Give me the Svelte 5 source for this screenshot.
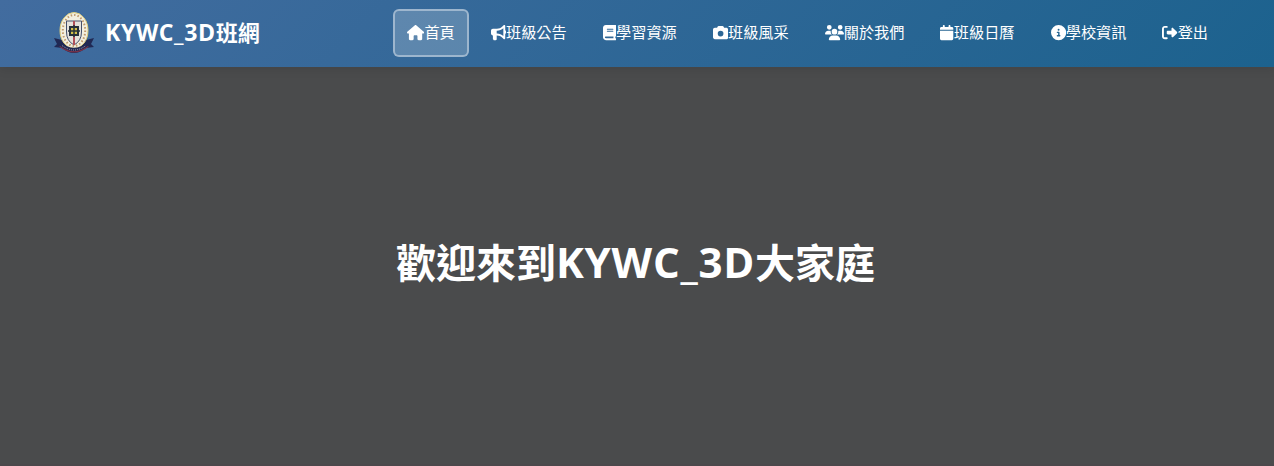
<script>
  const items = [
    { label: '首頁', w: 576, active: true, d: 'M575.8 255.5c0 18-15 32.1-32 32.1h-32l.7 160.2c0 2.700-.2 5.400-.5 8.100V472c0 22.100-17.900 40-40 40h-16c-1.100 0-2.200 0-3.300-.1c-1.400 .1-2.800 .1-4.200 .1H392c-22.100 0-40-17.900-40-40V376c0-17.700-14.300-32-32-32h-64c-17.700 0-32 14.300-32 32v96c0 22.100-17.900 40-40 40h-55.900c-1.500 0-3-.1-4.500-.2c-1.200 .1-2.400 .2-3.600 .2H104c-22.100 0-40-17.900-40-40V287.600H32c-18 0-32-14-32-32.100c0-9 3-17 10-24L266.400 8c7-7 15-8 22-8s15 2 21 7L564.800 231.500c8 7 12 15 11 24z' },
    { label: '班級公告', w: 512, d: 'M480 32c0-12.900-7.800-24.600-19.800-29.600s-25.700-2.200-34.900 6.900L381.700 53c-48 48-113.100 75-181 75H64c-35.300 0-64 28.700-64 64v96c0 35.300 28.700 64 64 64v128c0 17.700 14.300 32 32 32h64c17.700 0 32-14.300 32-32V352h8.700c67.900 0 133 27 181 75l43.600 43.600c9.200 9.200 22.900 11.900 34.900 6.900s19.800-16.600 19.800-29.600V300.400c18.600-8.800 32-32.500 32-60.400s-13.400-51.600-32-60.400V32zm-64 76.700V371.300C357.200 317.800 280.500 288 200.700 288H192v-96h8.700c79.800 0 156.500-29.800 215.300-83.300z' },
    { label: '學習資源', w: 448, d: 'M96 0C43 0 0 43 0 96v320c0 53 43 96 96 96h320c17.700 0 32-14.300 32-32s-14.300-32-32-32v-64c17.700 0 32-14.300 32-32V32c0-17.700-14.300-32-32-32H96zm0 384h256v64H96c-17.700 0-32-14.300-32-32s14.300-32 32-32zm32-240c0-8.800 7.200-16 16-16h192c8.800 0 16 7.200 16 16s-7.200 16-16 16H144c-8.800 0-16-7.200-16-16zm16 48h192c8.800 0 16 7.200 16 16s-7.200 16-16 16H144c-8.800 0-16-7.200-16-16s7.200-16 16-16z' },
    { label: '班級風采', w: 512, d: 'M149.100 64.800L138.700 96H64C28.700 96 0 124.700 0 160v256c0 35.300 28.700 64 64 64h384c35.300 0 64-28.700 64-64V160c0-35.300-28.700-64-64-64h-74.700L362.900 64.800C356.400 45.200 338.100 32 317.400 32H194.600c-20.700 0-39 13.200-45.500 32.800zM256 192a96 96 0 1 1 0 192 96 96 0 1 1 0-192z' },
    { label: '關於我們', w: 640, d: 'M144 0a80 80 0 1 1 0 160A80 80 0 1 1 144 0zM512 0a80 80 0 1 1 0 160A80 80 0 1 1 512 0zM0 298.700C0 239.800 47.800 192 106.700 192h42.700c15.900 0 31 3.500 44.600 9.700c-1.300 7.200-1.900 14.700-1.900 22.300c0 38.200 16.800 72.500 43.300 96H21.300C9.600 320 0 310.400 0 298.700zM405.300 320h-.7c26.600-23.500 43.300-57.800 43.300-96c0-7.600-.7-15-1.900-22.300c13.600-6.300 28.700-9.700 44.600-9.700h42.700C592.200 192 640 239.800 640 298.700c0 11.800-9.600 21.300-21.300 21.300H405.300zM224 224a96 96 0 1 1 192 0 96 96 0 1 1-192 0zM128 485.300C128 411.700 187.700 352 261.300 352h117.400C452.300 352 512 411.700 512 485.300c0 14.700-11.900 26.700-26.700 26.700H154.700c-14.700 0-26.700-11.900-26.700-26.700z' },
    { label: '班級日曆', w: 448, d: 'M96 32v32H48C21.500 64 0 85.500 0 112v48h448v-48c0-26.500-21.500-48-48-48h-48V32c0-17.700-14.300-32-32-32s-32 14.300-32 32v32H160V32c0-17.700-14.300-32-32-32S96 14.300 96 32zM448 192H0v272c0 26.500 21.500 48 48 48h352c26.500 0 48-21.500 48-48V192z' },
    { label: '學校資訊', w: 512, d: 'M256 512A256 256 0 1 0 256 0a256 256 0 1 0 0 512zM216 336h24v-64h-24c-13.300 0-24-10.700-24-24s10.700-24 24-24h48c13.300 0 24 10.700 24 24v88h8c13.300 0 24 10.700 24 24s-10.700 24-24 24h-80c-13.300 0-24-10.700-24-24s10.700-24 24-24zm40-208a32 32 0 1 1 0 64 32 32 0 1 1 0-64z' },
    { label: '登出', w: 512, d: 'M377.900 105.900L500.700 228.700c7.200 7.200 11.300 17.100 11.300 27.300s-4.100 20.100-11.300 27.300L377.900 406.100c-6.400 6.400-15 9.900-24 9.900c-18.700 0-33.900-15.200-33.900-33.900V320H192c-17.700 0-32-14.300-32-32v-64c0-17.700 14.300-32 32-32h128v-62.100c0-18.700 15.200-33.900 33.900-33.900c9 0 17.600 3.600 24 9.900zM160 96H96c-17.700 0-32 14.300-32 32v256c0 17.700 14.300 32 32 32h64c17.700 0 32 14.300 32 32s-14.300 32-32 32H96c-53 0-96-43-96-96V128C0 75 43 32 96 32h64c17.700 0 32 14.300 32 32s-14.300 32-32 32z' }
  ];
</script>

<header>
  <div class="bar">
    <a class="brand" href="#home">
      <svg class="crest" viewBox="0 0 44 44" aria-hidden="true">
        <path d="M2 27l8 2q12 11 24 0l8-2-3 6 3 3-8 1q-12 10-24 0l-8-1 3-3z" fill="#202954" />
        <path d="M8 35q14 11 28 0" fill="none" stroke="#7b3349" stroke-width="2" />
        <ellipse cx="22" cy="19.500" rx="14" ry="18" fill="#f3efdf" stroke="#e0cf7c" stroke-width="1" />
        <ellipse cx="22" cy="19.500" rx="11.200" ry="15.500" fill="none" stroke="#c09a6c" stroke-width="2" stroke-dasharray="1.500 2" />
        <path d="M14.500 10h15v11q0 9-7.500 13-7.500-4-7.500-13z" fill="#e4e2dc" stroke="#46506c" stroke-width="1" />
        <path d="M22 10v24" stroke="#b0505a" stroke-width="2" />
        <path d="M18 16h8v8h-8z" fill="#d3c04b" stroke="#26313b" stroke-width="2" />
        <path d="M22 14v12M16 20h12" stroke="#26313b" stroke-width="1.500" />
        <path d="M7 32q15 13 30 0" fill="none" stroke="#202954" stroke-width="3.500" />
        <path d="M10 34.500q12 9 24 0" fill="none" stroke="#cbbac5" stroke-width=".8" stroke-dasharray="1 1" />
      </svg>
      <span class="name"><span class="latin">KYWC_3D</span>班網</span>
    </a>
    <nav>
      {#each items as item}
        <a href="#{item.label}" class:active={item.active}>
          <svg viewBox="0 0 {item.w} 512" style="width:{item.w / 512}em" aria-hidden="true"><path fill-rule="evenodd" d={item.d} /></svg><span>{item.label}</span>
        </a>
      {/each}
    </nav>
  </div>
</header>
<main>
  <h1>歡迎來到<span class="latin">KYWC_3D</span>大家庭</h1>
</main>

<style>
  :global(body) { background: #4a4b4c; overflow: hidden; }
  header, main { font-family: "Noto Sans CJK TC", sans-serif; color: #fff; }
  header {
    position: relative;
    height: 67px;
    background: linear-gradient(135deg, #426c9f, #1c628e);
    box-shadow: 0 2px 10px rgba(0, 0, 0, 0.1);
  }
  .bar {
    box-sizing: border-box;
    width: 1200px;
    height: 66px;
    margin: 0 auto;
    padding: 0 15px;
    display: flex;
    align-items: center;
    justify-content: space-between;
  }
  a { color: #fff; text-decoration: none; }
  .brand { display: flex; align-items: center; gap: 9px; }
  .crest { width: 44px; height: 44px; }
  .name { padding-bottom: 3px; font-size: 22px; font-weight: 700; line-height: 32px; white-space: nowrap; }
  .latin { font-family: "Open Sans", sans-serif; font-size: 1.05em; letter-spacing: 0.018em; }
  .name .latin { letter-spacing: 0.025em; }
  nav { display: flex; gap: 8px; }
  nav a {
    box-sizing: border-box;
    height: 48px;
    display: flex;
    align-items: center;
    padding: 0 12px;
    border: 2px solid transparent;
    border-radius: 6px;
    font-size: 15.2px;
    line-height: 20px;
    white-space: nowrap;
  }
  nav a.active { background: rgba(255, 255, 255, 0.2); border-color: rgba(255, 255, 255, 0.4); }
  nav svg { height: 1em; flex: none; fill: #fff; }
  nav span { padding-bottom: 5px; }
  main {
    box-sizing: border-box;
    height: 399px;
    display: flex;
    align-items: center;
    justify-content: center;
    background: #4a4b4c;
    border-bottom: 2px solid #4b484b;
  }
  h1 { margin: 0 3px 9px 0; font-size: 40px; line-height: 60px; font-weight: 700; white-space: nowrap; }
</style>
